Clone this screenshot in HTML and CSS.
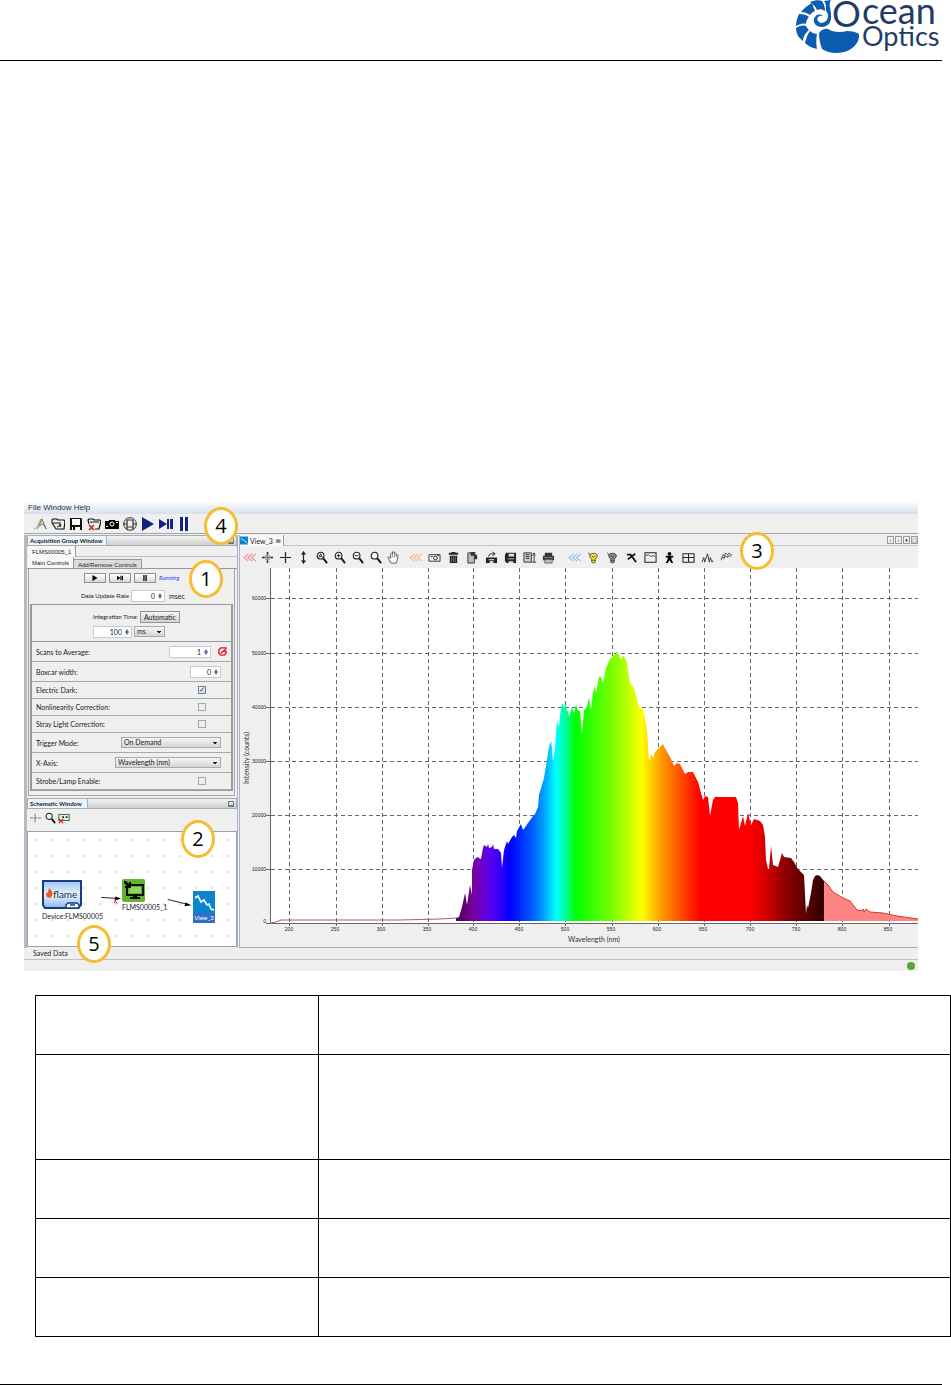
FILE: index.html
```html
<!DOCTYPE html>
<html lang="en">
<head>
    <meta charset="UTF-8">
    <meta name="viewport" content="width=device-width, initial-scale=1.0">
    <title>Ocean Optics</title>
    <link rel="stylesheet" href="styles.css">
</head>
<body>
    <!-- icons -->
    <svg class="sprite" aria-hidden="true">
        <symbol id="i-new" viewBox="0 0 14 14"><path d="M1 12C5 11 6 5 8 2" stroke="#7fae55" fill="none"/><path d="M4 12C7 9 7 5 9 2L13 12C11 7 9 6 7 9" stroke="#556" fill="#d8df9a" stroke-width=".8"/></symbol>
        <symbol id="i-open" viewBox="0 0 14 14"><path d="M1 5V3l1-1h4l1 1h6l1 1-1 8H5L1 6h9" fill="none" stroke="#111" stroke-width="1.2"/><path d="M6 10l4-2M8 7l2 1-1 2" stroke="#111" fill="none"/></symbol>
        <symbol id="i-save" viewBox="0 0 14 14"><path d="M1 1h11l1 1v11H1z" fill="#111"/><path d="M3 2h8v6H3zM3 10h8v3H3z" fill="#fff"/><path d="M4 10h2v3H4z"/></symbol>
        <symbol id="i-del" viewBox="0 0 14 14"><path d="M2 7L1 3l1-1h4l1 1h6l1 1-2 8H8M3 5h9" fill="none" stroke="#111" stroke-width="1.2"/><path d="M2 8l5 5M7 8l-5 5" stroke="#e01818" stroke-width="1.6"/></symbol>
        <symbol id="i-cam" viewBox="0 0 14 14"><path d="M0 4h4V3h6v1h4v8H0z" fill="#000"/><circle cx="7" cy="7" r="2" fill="#000" stroke="#fff"/><path d="M1 9h2v1H1zM11 5h2v1h-2z" fill="#fff"/></symbol>
        <symbol id="i-globe" viewBox="0 0 14 14"><circle cx="7" cy="7" r="6.3" fill="#eee" stroke="#333"/><path d="M4 3h6v7H4zM0 7h4M10 7h4M4 10v3M10 10v3" fill="none" stroke="#333" stroke-width="1.2"/></symbol>
        <symbol id="i-play" viewBox="0 0 14 14"><path d="M1 0l12 7-12 7z"/></symbol>
        <symbol id="i-step" viewBox="0 0 14 14"><path d="M0 2l8 5-8 5zM8 2h2v10H8zM11 2h3v10h-3z"/></symbol>
        <symbol id="i-pause" viewBox="0 0 14 14"><path d="M3 0h3v14H3zM8 0h3v14H8z"/></symbol>
        <symbol id="i-back" viewBox="0 0 14 14"><path d="M6 3L1 7l5 4M10 3L5 7l5 4M14 3L9 7l5 4" fill="none" stroke="currentColor" stroke-width="1.1"/></symbol>
        <symbol id="i-crossdot" viewBox="0 0 14 14"><path d="M7 1v3M7 10v3M1 7h3M10 7h3M6 7h2" stroke="#222" stroke-width="1.6"/><path d="M5 5h4v4H5z" fill="none" stroke="#555" stroke-width=".7"/></symbol>
        <symbol id="i-cross" viewBox="0 0 14 14"><path d="M7 1v12M1 7h12" stroke="#222" stroke-width="1.3"/></symbol>
        <symbol id="i-crossfaint" viewBox="0 0 14 14"><path d="M6 2v10M0 7h4M5 7h3M9 7h4" stroke="#666"/></symbol>
        <symbol id="i-vert" viewBox="0 0 14 14"><path d="M7 1v12M5 4l2-3 2 3M5 10l2 3 2-3" fill="none" stroke="#222" stroke-width="1.3"/></symbol>
        <symbol id="i-zoom" viewBox="0 0 14 14"><circle cx="6" cy="5" r="3.6" fill="#f8f8f8" stroke="#222" stroke-width="1.2"/><path d="M9 8l4 5" stroke="#111" stroke-width="2"/></symbol>
        <symbol id="i-zoomauto" viewBox="0 0 14 14"><use href="#i-zoom"/><path d="M4 7l2-4 2 4M5 6h2" fill="none" stroke="#222"/></symbol>
        <symbol id="i-zoomin" viewBox="0 0 14 14"><use href="#i-zoom"/><path d="M4 5h4M6 3v4" stroke="#222"/></symbol>
        <symbol id="i-zoomout" viewBox="0 0 14 14"><use href="#i-zoom"/><path d="M4 5h4" stroke="#222"/></symbol>
        <symbol id="i-hand" viewBox="0 0 14 14"><path d="M4 13L1 7l1-1 2 2V3l1-1 1 1V1h2v2l1-1 1 1v2l1-1 1 1-1 5-1 3z" fill="#fff" stroke="#444" stroke-width=".9"/><path d="M6 3v4M8 3v4M10 4v3" stroke="#444" stroke-width=".6"/></symbol>
        <symbol id="i-photo" viewBox="0 0 14 14"><path d="M1 4h12v7H1z" fill="#eee" stroke="#333"/><circle cx="8" cy="7.500" r="2" fill="none" stroke="#333"/><path d="M3 6h2M10 5h2" stroke="#333"/></symbol>
        <symbol id="i-trash" viewBox="0 0 14 14"><path d="M2 2h3V1h4v1h3v2H2zM3 5h8v8H3z" fill="#222"/><path d="M5 6v6M7 6v6M9 6v6" stroke="#999" stroke-width=".7"/></symbol>
        <symbol id="i-copy" viewBox="0 0 14 14"><path d="M2 2h7v11H2z" fill="#bbb" stroke="#333"/><path d="M5 1h5v3h2v5H9V5H5z" fill="#333"/></symbol>
        <symbol id="i-load" viewBox="0 0 14 14"><path d="M1 7h12v6H1z" fill="#222"/><path d="M4 9h6v1H4zM5 11h4v2H5z" fill="#eee"/><path d="M4 6c0-3 2-3 6-3M8 1l3 2-3 2" stroke="#222" fill="none"/></symbol>
        <symbol id="i-disk" viewBox="0 0 14 14"><path d="M2 2h11v11H3l-2-2V5z" fill="#222"/><path d="M5 3h6v3H5zM4 8h7v1H4zM5 11h5v2H5z" fill="#ddd"/></symbol>
        <symbol id="i-scale" viewBox="0 0 14 14"><path d="M1 2h8v10H1z" fill="#ccc" stroke="#333"/><path d="M3 4h4M3 6h4M3 8h4M12 3v9M10 5l2-3 1 3M9 12h5" stroke="#333" fill="none"/></symbol>
        <symbol id="i-print" viewBox="0 0 14 14"><path d="M3 2h8v3H3zM1 5h12v5H1z" fill="#333"/><path d="M3 9h8v4H3z" fill="#bbb" stroke="#444" stroke-width=".7"/><path d="M2 7h10" stroke="#ccc" stroke-width=".6"/></symbol>
        <symbol id="i-bulb" viewBox="0 0 14 14"><path d="M3 4c2-2 6-2 8 0 1 2-1 3-2 5v3l-2 1-2-1V9C4 7 2 6 3 4z" fill="currentColor" stroke="#333" stroke-width=".8"/><path d="M1 2l3 2M5 10h4M5 5l2 2 2-2" stroke="#333" fill="none" stroke-width=".8"/></symbol>
        <symbol id="i-pick" viewBox="0 0 14 14"><path d="M2 4h5M11 3L3 9M6 4l6 8" stroke="#111" stroke-width="1.9"/></symbol>
        <symbol id="i-chart" viewBox="0 0 14 14"><path d="M1 2h12v10H1z" fill="#eee" stroke="#222" stroke-width="1.1"/><path d="M2 5l3-1 2 2 3-1 2 1" fill="none" stroke="#444"/></symbol>
        <symbol id="i-man" viewBox="0 0 14 14"><circle cx="7" cy="3" r="2"/><path d="M3 5h8v2H9v2l2 4H9l-2-3-2 3H3l2-4V7H3z"/></symbol>
        <symbol id="i-grid" viewBox="0 0 14 14"><path d="M1 3h12v9H1zM1 7h12M7 3v9" fill="none" stroke="#222" stroke-width="1.1"/></symbol>
        <symbol id="i-peaks" viewBox="0 0 14 14"><path d="M1 12l2-5 1 5 3-9 2 9 1-5 2 5 1-2" fill="none" stroke="#333"/></symbol>
        <symbol id="i-multi" viewBox="0 0 14 14"><path d="M1 10l2-6 2 1 1-3 2 2 2-2 1 2h2M2 7h3l1-2 2 2 2-2 2 1M4 9l1-4M8 7l1-3" fill="none" stroke="#444" stroke-width=".9"/></symbol>
        <symbol id="i-board" viewBox="0 0 14 14"><path d="M1 3h12v7H1z" fill="#e4f0e4" stroke="#337a44" stroke-width="1.2"/><path d="M5 6h2M9 6h2" stroke="#222" stroke-width="2"/><path d="M1 8l5 5M6 8l-5 5" stroke="#e01818" stroke-width="1.5"/></symbol>
        <symbol id="i-view" viewBox="0 0 22 22"><path d="M0 0h22v22H0z" fill="#0b84cf"/><path d="M2 7l3-2 3 6 3-2 3 5 2-1 2 5 3 1" fill="none" stroke="#fff" stroke-width="1.600"/></symbol>
    </svg>

    <header class="page-header">
        <svg class="logo" viewBox="0 0 148 56" role="img" aria-label="Ocean Optics">
            <g fill="#0c5cb0">
                <path d="M25 33C27 30 31 28 34 29C38 32 46 33 53 31C58 31 62 32 65 34C66 42 59 50 50 52C42 54 34 53 28 49C26 44 25 38 25 33Z"/>
                <path d="M16 31C18 33 21 34 23 34C22 39 22 44 23 49C18 48 14 46 11 43C12 39 13 35 16 31Z"/>
                <path d="M12 26C13 28 14 29 15 30C11 33 9 37 9 41C5 38 2 34 2 28C5 26 8 25 12 26Z"/>
                <path d="M12 24C9 23 6 24 2 26C2 22 3 18 5 14C9 14 13 15 15 17C13 19 12 21 12 24Z"/>
                <path d="M16 15C13 13 11 12 7 12C10 8 14 5 18 3C19 6 20 9 21 11C19 12 17 13 16 15Z"/>
                <path d="M23 10C22 7 19 4 16 2C21 0 25 0 28 1C30 4 31 7 31 11C28 9 26 9 23 10Z"/>
                <path d="M32 11C32 7 32 3 30 1L37 0C34 5 37 8 37 15C38 22 34 27 28 27C21 27 18 21 21 17C23 14 27 14 29 16C25 15 22 18 24 21C27 25 34 22 34 16C34 14 33 12 32 11Z"/>
            </g>
            <text x="38" y="27" class="logo-big">O</text>
            <text x="68" y="24" class="logo-big">cean</text>
            <text x="68" y="46" class="logo-small">Optics</text>
        </svg>
    </header>

    <main>
        <section class="app">
            <nav class="menubar"><a href="#">File</a> <a href="#">Window</a> <a href="#">Help</a></nav>
            <div class="toolbar">
                <button aria-label="New"><svg><use href="#i-new"/></svg></button>
                <button aria-label="Open"><svg><use href="#i-open"/></svg></button>
                <button aria-label="Save"><svg><use href="#i-save"/></svg></button>
                <button aria-label="Delete"><svg><use href="#i-del"/></svg></button>
                <button aria-label="Device"><svg><use href="#i-cam"/></svg></button>
                <button aria-label="Network"><svg><use href="#i-globe"/></svg></button>
                <button class="navy" aria-label="Play"><svg><use href="#i-play"/></svg></button>
                <button class="navy" aria-label="Step"><svg><use href="#i-step"/></svg></button>
                <button class="navy" aria-label="Pause"><svg><use href="#i-pause"/></svg></button>
            </div>

            <div class="panes">
                <div class="left">
                    <div class="titlebar"><h2>Acquisition Group Window</h2><button class="min" aria-label="Minimize"></button></div>
                    <div class="group-tabs"><button class="tab">FLMS00005_1</button></div>
                    <div class="tabs"><button class="tab">Main Controls</button><button class="tab off">Add/Remove Controls</button></div>
                    <div class="controls">
                        <div class="run">
                            <button aria-label="Run"><svg><use href="#i-play"/></svg></button>
                            <button aria-label="Single step"><svg><use href="#i-step"/></svg></button>
                            <button aria-label="Hold"><svg><use href="#i-pause"/></svg></button>
                            <em>Running</em>
                        </div>
                        <div class="rate">
                            <label for="rate">Data Update Rate</label>
                            <span class="spin"><input id="rate" type="text" value="0"></span>
                            <span>msec</span>
                        </div>
                        <div class="settings">
                            <div class="integration">
                                <div><label for="time">Integration Time:</label><button class="auto">Automatic</button></div>
                                <div>
                                    <span class="spin wide"><input id="time" type="text" value="100"></span>
                                    <select class="unit" aria-label="Unit"><option>ms</option></select>
                                </div>
                            </div>
                            <div class="row tall"><label for="scans">Scans to Average:</label>
                                <span class="spin big"><input id="scans" type="text" value="1"></span>
                                <svg class="reset" viewBox="0 0 10 10"><path d="M9 2V1H3L1 3v4l2 2h4l2-2V5H6M3 7l6-5" fill="none" stroke="#d8232a" stroke-width="1.600"/></svg>
                            </div>
                            <div class="row tall"><label for="boxcar">Boxcar width:</label><span class="spin near"><input id="boxcar" type="text" value="0"></span></div>
                            <div class="row"><label for="dark">Electric Dark:</label><input id="dark" type="checkbox" checked></div>
                            <div class="row"><label for="nonlin">Nonlinearity Correction:</label><input id="nonlin" type="checkbox"></div>
                            <div class="row"><label for="stray">Stray Light Correction:</label><input id="stray" type="checkbox"></div>
                            <div class="row tall"><label for="trigger">Trigger Mode:</label><select id="trigger"><option>On Demand</option></select></div>
                            <div class="row tall"><label for="axis">X-Axis:</label><select id="axis" class="long"><option>Wavelength (nm)</option></select></div>
                            <div class="row"><label for="strobe">Strobe/Lamp Enable:</label><input id="strobe" type="checkbox"></div>
                        </div>
                    </div>

                    <div class="titlebar second"><h2>Schematic Window</h2><button class="min" aria-label="Minimize"></button></div>
                    <div class="sch-tools">
                        <button aria-label="Grid"><svg><use href="#i-crossfaint"/></svg></button>
                        <button aria-label="Zoom"><svg><use href="#i-zoom"/></svg></button>
                        <button aria-label="Remove"><svg><use href="#i-board"/></svg></button>
                    </div>
                    <div class="canvas">
                        <svg class="wires" viewBox="0 0 209 115">
                            <path d="M73 66l16 1M140 68l20 5" stroke="#222" fill="none"/>
                            <path d="M93 67l-6-2v4zM164 74l-6-3-1 4z"/>
                            <path d="M86 68l3 4M88 68l-2 4" stroke="#e02020"/>
                        </svg>
                        <div class="node device">
                            <svg viewBox="0 0 40 29"><defs><linearGradient id="dev" x2="0" y2="1"><stop stop-color="#9cc4f0"/><stop offset=".5" stop-color="#e8f3fd"/><stop offset="1" stop-color="#8cb9ec"/></linearGradient></defs><path d="M1 1h38v24l-3 3H3l-2-3z" fill="url(#dev)" stroke="#173a80" stroke-width="2"/><path d="M24 28v-3l2-2h9l2 2v3z" fill="#fff" stroke="#173a80" stroke-width="1.500"/><path d="M28 25h5" stroke="#173a80" stroke-width="1.500"/><path d="M7 8c5 4 4 8 1 10C4 18 3 14 5 12c0 2 1 1 2-4z" fill="#ee5a24"/><text x="11" y="18">flame</text></svg>
                            <span>Device:FLMS00005</span>
                        </div>
                        <div class="node group">
                            <svg viewBox="0 0 23 23"><rect width="23" height="23" rx="2" fill="#63b331"/><path d="M8 6h13v10H5V9" fill="none" stroke="#111" stroke-width="2"/><path d="M8 8h11v6H7z" fill="#8fd45c"/><path d="M11 16h4v2h3v2H8v-2h3zM2 2h2l3 3V3h2v6H3V7h2L2 4z"/></svg>
                            <span>FLMS00005_1</span>
                        </div>
                        <div class="node view">
                            <svg viewBox="0 0 22 22"><use href="#i-view"/></svg>
                            <span>View_3</span>
                        </div>
                    </div>
                </div>

                <div class="right">
                    <div class="view-tabs">
                        <button class="view-tab"><svg><use href="#i-view"/></svg>View_3 <b>⊠</b></button>
                        <div class="win-btns"><button>‹</button><button>›</button><button>▾</button><button>□</button></div>
                    </div>
                    <div class="view-tools">
                        <div class="set tight">
                            <button class="red" aria-label="Collapse"><svg><use href="#i-back"/></svg></button>
                            <button aria-label="Cursor"><svg><use href="#i-crossdot"/></svg></button>
                            <button aria-label="Crosshair"><svg><use href="#i-cross"/></svg></button>
                            <button aria-label="Scale height"><svg><use href="#i-vert"/></svg></button>
                            <button aria-label="Auto zoom"><svg><use href="#i-zoomauto"/></svg></button>
                            <button aria-label="Zoom in"><svg><use href="#i-zoomin"/></svg></button>
                            <button aria-label="Zoom out"><svg><use href="#i-zoomout"/></svg></button>
                            <button aria-label="Zoom region"><svg><use href="#i-zoom"/></svg></button>
                            <button aria-label="Pan"><svg><use href="#i-hand"/></svg></button>
                        </div>
                        <div class="set">
                            <button class="orange" aria-label="Collapse"><svg><use href="#i-back"/></svg></button>
                            <button aria-label="Snapshot"><svg><use href="#i-photo"/></svg></button>
                            <button aria-label="Delete"><svg><use href="#i-trash"/></svg></button>
                            <button aria-label="Copy"><svg><use href="#i-copy"/></svg></button>
                            <button aria-label="Load"><svg><use href="#i-load"/></svg></button>
                            <button aria-label="Save"><svg><use href="#i-disk"/></svg></button>
                            <button aria-label="Configure"><svg><use href="#i-scale"/></svg></button>
                            <button aria-label="Print"><svg><use href="#i-print"/></svg></button>
                        </div>
                        <div class="set">
                            <button class="blue" aria-label="Collapse"><svg><use href="#i-back"/></svg></button>
                            <button class="yellow" aria-label="Light"><svg><use href="#i-bulb"/></svg></button>
                            <button class="grey" aria-label="Dark"><svg><use href="#i-bulb"/></svg></button>
                            <button aria-label="Tool"><svg><use href="#i-pick"/></svg></button>
                            <button aria-label="Chart"><svg><use href="#i-chart"/></svg></button>
                            <button aria-label="Peak"><svg><use href="#i-man"/></svg></button>
                            <button aria-label="Table"><svg><use href="#i-grid"/></svg></button>
                            <button aria-label="Peaks"><svg><use href="#i-peaks"/></svg></button>
                            <button aria-label="Overlays"><svg><use href="#i-multi"/></svg></button>
                        </div>
                    </div>
                    <svg class="chart" viewBox="240 568 678 379">
                        <defs>
                            <linearGradient id="rainbow" gradientUnits="userSpaceOnUse" x1="456" x2="824" y1="0" y2="0">
                                <stop offset="0" stop-color="#4b004e"/><stop offset=".05" stop-color="#7800a4"/><stop offset=".095" stop-color="#5a00f5"/>
                                <stop offset=".147" stop-color="#0000ff"/><stop offset=".21" stop-color="#0060ff"/><stop offset=".245" stop-color="#00b0ff"/>
                                <stop offset=".272" stop-color="#00ffff"/><stop offset=".3" stop-color="#00ff90"/><stop offset=".325" stop-color="#00ff00"/>
                                <stop offset=".43" stop-color="#80ff00"/><stop offset=".505" stop-color="#ffff00"/><stop offset=".555" stop-color="#ffa000"/>
                                <stop offset=".61" stop-color="#ff5000"/><stop offset=".663" stop-color="#ff0000"/><stop offset=".8" stop-color="#ff0000"/>
                                <stop offset=".83" stop-color="#e00000"/><stop offset=".907" stop-color="#800000"/><stop offset="1" stop-color="#300000"/>
                            </linearGradient>
                        </defs>
                        <path d="M271 568h647v355H271z" fill="#fff"/>
                        <g class="gridlines">
                            <path d="M271 598.500H918M271 653.500H918M271 707.500H918M271 761.500H918M271 815.500H918M271 869.500H918"/>
                            <path d="M289.500 568V923M336.500 568V923M382.500 568V923M428.500 568V923M473.500 568V923M519.500 568V923M565.500 568V923M612.500 568V923M658.500 568V923M704.500 568V923M750.500 568V923M796.500 568V923M842.500 568V923M889.500 568V923"/>
                        </g>
                        <path class="tail" d="M824 921V881L828 885 833 892 843 898 850 901 857 910 861 911 863 909 864 912 866 909 870 912 883 913 897 916 918 919V921Z"/>
                        <path class="tail-line" d="M824 881L828 885 833 892 843 898 850 901 857 910 861 911 863 909 864 912 866 909 870 912 883 913 897 916 918 919"/>
                        <path fill="url(#rainbow)" d="M456 921V918L459 917 462 907 465 893 467 905 470 885 472 895 472 870 474 860 477 857 481 859 483 848 484 845 487 847 488 844 489 848 492 847 493 844 494 849 498 849 501 853 502 868 504 850 507 841 508 844 512 837 514 835 516 838 517 831 521 824 523 830 526 826 528 823 533 816 535 814 538 807 539 795 544 778 547 760 549 747 551 741 552 748 553 762 555 747 557 720 559 727 560 715 562 703 564 707 566 704 567 712 568 710 569 717 572 707 574 713 576 705 578 711 580 710 582 734 584 710 587 707 589 697 591 710 593 692 595 686 596 693 599 677 601 677 603 683 606 668 610 659 615 654 617 651 621 660 622 657 624 656 627 663 630 683 634 688 637 699 639 707 643 709 647 730 649 762 651 754 653 758 655 752 659 748 663 744 666 750 670 757 674 766 677 763 680 764 685 774 688 772 693 772 698 782 701 793 703 800 705 796 708 797 710 816 713 800 715 797 736 797 738 803 739 830 743 816 745 826 748 813 751 825 754 819 760 821 763 825 765 837 766 860 768 869 769 869 771 846 773 865 778 867 782 853 784 857 791 858 794 862 798 869 804 875 806 914 807 905 808 908 811 893 813 880 815 876 817 875 820 876 824 881V921Z"/>
                        <path class="base" d="M271 923L276 922 281 920 400 920 440 919 456 918"/>
                        <path class="axis" d="M270.500 568V923.500H918M266 598.500h4M266 653.500h4M266 707.500h4M266 761.500h4M266 815.500h4M266 869.500h4M266 923.500h4M289.500 923v3M336.500 923v3M382.500 923v3M428.500 923v3M473.500 923v3M519.500 923v3M565.500 923v3M612.500 923v3M658.500 923v3M704.500 923v3M750.500 923v3M796.500 923v3M842.500 923v3M889.500 923v3"/>
                        <g class="ticks y">
                            <text x="266" y="600">60000</text><text x="266" y="655">50000</text><text x="266" y="709">40000</text><text x="266" y="763">30000</text><text x="266" y="817">20000</text><text x="266" y="871">10000</text><text x="266" y="923">0</text>
                        </g>
                        <g class="ticks">
                            <text x="289" y="931">200</text><text x="335" y="931">250</text><text x="381" y="931">300</text><text x="427" y="931">350</text><text x="473" y="931">400</text><text x="519" y="931">450</text><text x="565" y="931">500</text><text x="611" y="931">550</text><text x="657" y="931">600</text><text x="703" y="931">650</text><text x="750" y="931">700</text><text x="796" y="931">750</text><text x="842" y="931">800</text><text x="888" y="931">850</text>
                        </g>
                        <text class="name" x="594" y="942">Wavelength (nm)</text>
                        <text class="name" transform="translate(249 758) rotate(-90)">Intensity (counts)</text>
                    </svg>
                </div>
            </div>
            <div class="saved">Saved Data</div>
            <div class="status"><i></i></div>

            <span class="callout c1">1</span>
            <span class="callout c2">2</span>
            <span class="callout c3">3</span>
            <span class="callout c4">4</span>
            <span class="callout c5">5</span>
        </section>

        <table class="legend">
            <tr><td></td><td></td></tr>
            <tr class="high"><td></td><td></td></tr>
            <tr><td></td><td></td></tr>
            <tr><td></td><td></td></tr>
            <tr><td></td><td></td></tr>
        </table>
    </main>
    <footer></footer>
</body>
</html>
```
FILE: styles.css
```css
* {
    margin: 0;
    padding: 0;
    box-sizing: border-box;
}

body {
    background: #fff;
    font-family: "Liberation Sans", Arial, sans-serif;
}

.sprite {
    display: none;
}

svg {
    display: block;
}

.page-header {
    height: 61px;
    margin-right: 9px;
    border-bottom: 1px solid #000;
    display: flex;
    justify-content: flex-end;
}

.logo {
    width: 148px;
    height: 56px;
}

.logo text {
    font-family: Lato, sans-serif;
    fill: #1f3d68;
}

.logo .logo-big {
    font-size: 36px;
}

.logo .logo-small {
    font-size: 27px;
}

/* application window */
.app {
    position: relative;
    margin: 441px 33px 0 24px;
    background: #efefef;
    font-family: Lato, "Liberation Sans", sans-serif;
    font-size: 7px;
    line-height: 10px;
    color: #222;
}

.app button,
.app input,
.app select {
    font: inherit;
    color: inherit;
    border: none;
    background: none;
}

.menubar {
    height: 12px;
    padding: 1px 4px;
    font-family: "Liberation Sans", Arial, sans-serif;
    font-size: 8px;
    background: linear-gradient(#fafcff, #d5dfed);
}

.menubar a {
    color: #333;
    text-decoration: none;
}

.toolbar {
    height: 20px;
    display: flex;
    align-items: center;
    gap: 4px;
    padding: 0 9px;
    border-bottom: 1px solid #a5a5a5;
}

.toolbar svg {
    width: 14px;
    height: 14px;
}

.navy {
    fill: #14247e;
}

.panes {
    display: grid;
    grid-template-columns: 214px 1fr;
    gap: 1px;
    padding-top: 1px;
}

.left {
    border-left: 3px solid #b4bac2;
    border-right: 1px solid #a9b4c2;
    min-width: 0;
}

.titlebar {
    height: 11px;
    display: flex;
    align-items: center;
    justify-content: space-between;
    border: 1px solid #a3adb8;
    background: linear-gradient(#f2f2f2, #cfcfcf);
    padding-right: 2px;
}

.titlebar h2 {
    width: 79px;
    height: 9px;
    padding-left: 2px;
    font-size: 6px;
    line-height: 9px;
    white-space: nowrap;
    border-right: 1px solid #9bbcd0;
    background: #edf5fa;
}

.titlebar.second h2 {
    width: 60px;
}

.titlebar .min {
    width: 6px;
    height: 6px;
    border: 1px solid #777;
    border-bottom-width: 2px;
}

.group-tabs,
.tabs {
    display: flex;
    height: 11px;
    padding-left: 1px;
    border-bottom: 1px solid #c0c0c0;
}

.app .tab {
    height: 11px;
    padding: 0 4px;
    font-family: "Liberation Sans", Arial, sans-serif;
    font-size: 6px;
    line-height: 10px;
    background: #f8f8f8;
    border-right: 1px solid #999;
    white-space: nowrap;
}

.tabs {
    height: 12px;
    border-color: #999;
}

.app .tab.off {
    height: 9px;
    margin-top: 2px;
    border-top: 1px solid #999;
    background: #dcdcdc;
}

.controls {
    height: 227px;
    margin: 0 2px 0 1px;
    border: 1px solid #a5a5a5;
    border-top: none;
    padding: 0 1px;
}

.run {
    display: flex;
    align-items: center;
    height: 18px;
    padding-left: 54px;
    gap: 3px;
}

.app .run button {
    width: 22px;
    height: 10px;
    display: flex;
    align-items: center;
    justify-content: center;
    border: 1px solid #929292;
    background: linear-gradient(#fff, #d8d8d8);
}

.run svg {
    width: 8px;
    height: 6px;
}

.run em {
    color: #3434ff;
    font-size: 6px;
}

.rate {
    display: flex;
    align-items: center;
    height: 17px;
    padding-left: 51px;
    gap: 4px;
}

.rate label,
.integration label {
    flex: none;
    font-size: 6px;
    white-space: nowrap;
}

.spin {
    position: relative;
    width: 34px;
    height: 12px;
    background: #fff;
    border: 1px solid #c5cbd2;
    display: flex;
}

.spin input {
    width: 100%;
    padding-right: 9px;
    text-align: right;
}

.spin::before,
.spin::after {
    content: "";
    position: absolute;
    right: 2px;
    border: 2px solid transparent;
}

.spin::before {
    top: 0;
    border-bottom: 3px solid #5d719b;
}

.spin::after {
    bottom: 0;
    border-top: 3px solid #5d719b;
}

.spin.wide {
    width: 39px;
}

.spin.big {
    width: 42px;
}

.settings {
    border: 1px solid #999;
    border-width: 1px 2px;
}

.integration {
    height: 37px;
    padding: 4px 0 0 61px;
    border-bottom: 1px solid #999;
}

.integration div {
    display: flex;
    align-items: center;
    height: 15px;
    gap: 2px;
}

.rate label {
    width: 46px;
    font-family: "Liberation Sans", Arial, sans-serif;
}

.app .auto {
    width: 40px;
    height: 12px;
    line-height: 10px;
    border: 1px solid #929292;
    background: linear-gradient(#f5f5f5, #d2d2d2);
}

.row {
    height: 17px;
    display: flex;
    align-items: center;
    padding: 0 10px 0 4px;
    border-bottom: 1px solid #a8a8a8;
}

.row.tall {
    height: 20px;
}

.row label {
    flex: 1;
}

.spin.near {
    width: 31px;
}

.reset {
    width: 9px;
    height: 9px;
    margin: 0 -6px 0 7px;
}

.app input[type="checkbox"] {
    appearance: none;
    width: 8px;
    height: 8px;
    margin-right: 15px;
    border: 1px solid #a2a8ae;
    background: #eee;
}

.app input[type="checkbox"]:checked {
    border-color: #6d7f9c;
    background: linear-gradient(135deg, #fff, #c6d2e6);
}

.app input[type="checkbox"]:checked::after {
    content: "✓";
    display: block;
    font: bold 7px/6px "DejaVu Sans", sans-serif;
    color: #223;
}

.app select {
    appearance: none;
    width: 100px;
    height: 11px;
    padding-left: 2px;
    line-height: 9px;
    border: 1px solid #aaa;
    background:
        linear-gradient(#222, #222) right 3px top 4px / 4px 1px no-repeat,
        linear-gradient(#222, #222) right 4px top 5px / 2px 1px no-repeat,
        linear-gradient(#f6f6f6, #d4d4d4);
}

.app .long {
    width: 106px;
}

.app .unit {
    width: 31px;
}

.titlebar.second {
    margin-top: 2px;
}

.sch-tools {
    height: 22px;
    display: flex;
    align-items: center;
    gap: 2px;
    padding: 0 3px 4px;
}

.sch-tools svg {
    width: 12px;
    height: 12px;
}

/* schematic */
.canvas {
    position: relative;
    height: 116px;
    border: 1px solid #99a2ad;
    background: #fff radial-gradient(circle, #e2e2e2 1px, transparent 1px) 0 0 / 16px 16px;
}

.wires {
    width: 209px;
    height: 114px;
}

.node {
    position: absolute;
    display: flex;
    flex-direction: column;
    align-items: center;
    white-space: nowrap;
}

.device {
    left: 14px;
    top: 48px;
}

.device svg {
    width: 40px;
    height: 29px;
    align-self: flex-start;
}

.device span {
    margin-top: 2px;
}

.device text {
    font: 10px Lato, sans-serif;
    fill: #234;
}

.group {
    left: 94px;
    top: 47px;
    align-items: flex-start;
}

.group svg {
    width: 23px;
    height: 23px;
}

.view {
    left: 165px;
    top: 59px;
}

.view svg {
    width: 22px;
    height: 22px;
}

.view span {
    width: 22px;
    background: #2f6fc4;
    color: #fff;
    font-size: 6px;
    text-align: center;
}

/* view pane */
.right {
    min-width: 0;
    border-left: 1px solid #a9b4c2;
    border-bottom: 1px solid #aab;
}

.view-tabs {
    height: 11px;
    display: flex;
    justify-content: space-between;
    border-bottom: 1px solid #c5c5c5;
}

.app .view-tab {
    height: 11px;
    display: flex;
    align-items: center;
    gap: 2px;
    padding: 0 2px 0 0;
    background: #f8f8f8;
    border-right: 1px solid #999;
    line-height: 10px;
}

.view-tab svg {
    width: 8px;
    height: 9px;
}

.view-tab b {
    margin-left: 1px;
    font: 6px/8px "DejaVu Sans", sans-serif;
}

.win-btns {
    display: flex;
    align-items: center;
    gap: 1px;
}

.app .win-btns button {
    width: 7px;
    height: 8px;
    border: 1px solid #999;
    font: 5px/5px "DejaVu Sans", sans-serif;
}

.view-tools {
    height: 22px;
    display: flex;
    align-items: center;
    gap: 9px;
    padding: 0 3px;
}

.set {
    display: flex;
    gap: 6px;
}

.set.tight {
    gap: 5px;
}

.view-tools svg {
    width: 13px;
    height: 13px;
}

.set:last-child {
    margin-left: 4px;
}

.app .red {
    color: #ee8a8a;
}

.app .orange {
    color: #e8bd7d;
}

.app .blue {
    color: #8fbfe6;
}

.app .yellow {
    color: #f5e02c;
}

.app .grey {
    color: #8a8a8a;
}

.chart {
    width: 100%;
    height: auto;
}

.gridlines {
    fill: none;
    stroke: #666;
    stroke-dasharray: 4 3;
}

.tail {
    fill: #ff8484;
}

.tail-line {
    fill: none;
    stroke: #d33;
}

.base {
    fill: none;
    stroke: #b25a68;
}

.axis {
    fill: none;
    stroke: #666;
}

.ticks {
    font-family: "Liberation Sans", Arial, sans-serif;
    font-size: 5px;
    text-anchor: middle;
    fill: #222;
}

.ticks.y {
    text-anchor: end;
}

.name {
    font-size: 7px;
    text-anchor: middle;
    fill: #333;
}

.saved {
    height: 12px;
    padding-left: 9px;
    border-bottom: 1px solid #b8c0cc;
}

.status {
    height: 11px;
    display: flex;
    align-items: center;
    justify-content: flex-end;
    padding-right: 3px;
}

.status i {
    width: 8px;
    height: 8px;
    border-radius: 50%;
    background: #5ba52f;
}

.callout {
    position: absolute;
    width: 34px;
    height: 38px;
    border: 3px solid #f4bd32;
    border-radius: 50%;
    background: #fff;
    font: 20px/32px "Open Sans", sans-serif;
    color: #000;
    text-align: center;
}

.c1 { left: 165px; top: 58px; }
.c2 { left: 157px; top: 318px; }
.c3 { left: 716px; top: 30px; }
.c4 { left: 180px; top: 5px; }
.c5 { left: 53px; top: 423px; }

.legend {
    width: calc(100% - 35px);
    margin: 24px 0 0 35px;
    border-collapse: collapse;
}

.legend td {
    height: 59px;
    border: 1px solid #000;
}

.legend td:first-child {
    width: 283px;
}

.legend .high td {
    height: 105px;
}

footer {
    height: 48px;
    margin-right: 9px;
    border-bottom: 1px solid #000;
}
```
